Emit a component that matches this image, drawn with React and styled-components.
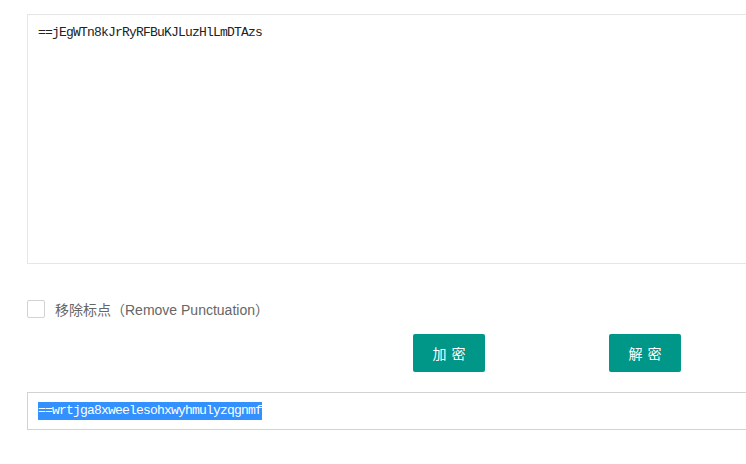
import styled, { createGlobalStyle } from "styled-components";

const GlobalStyle = createGlobalStyle`
  html, body {
    margin: 0;
    padding: 0;
    background: #fff;
    overflow: hidden;
  }
  body {
    font-family: "Liberation Sans", "Noto Sans CJK SC", sans-serif;
  }
`;

export const Page = styled.div`
  width: 960px;
  padding: 14px 0 0 27px;
  display: flex;
  flex-direction: column;
`;

export const InputArea = styled.div`
  height: 250px;
  border: 1px solid #e6e6e6;
  box-sizing: border-box;
  padding: 7px 10px;
`;

export const CodeText = styled.span`
  font-family: "Liberation Mono", "Noto Sans CJK SC", monospace;
  font-size: 13px;
  letter-spacing: -0.8px;
  line-height: 18px;
  background: ${(p) => (p.selected ? "#3390ff" : "transparent")};
  color: ${(p) => (p.selected ? "#fff" : "#222")};
`;

export const OptionRow = styled.label`
  display: flex;
  align-items: center;
  gap: 10px;
  margin-top: 36px;
  height: 18px;
`;

export const CheckBox = styled.span`
  width: 16px;
  height: 16px;
  border: 1px solid #d2d2d2;
  border-radius: 2px;
  background: #fff;
`;

export const OptionText = styled.span`
  font-size: 14px;
  color: #666;
  font-family: "Liberation Sans", "Noto Sans CJK SC", sans-serif;
`;

export const ButtonRow = styled.div`
  display: flex;
  gap: 124px;
  margin-top: 16px;
  padding-left: 386px;
`;

export const ActionButton = styled.button`
  width: 72px;
  height: 38px;
  border: none;
  border-radius: 2px;
  background: #009688;
  color: #fff;
  font-size: 14px;
  letter-spacing: 5px;
  padding: 0 0 0 5px;
  font-family: "Noto Sans CJK SC", sans-serif;
  cursor: pointer;
`;

export const OutputBox = styled.div`
  margin-top: 20px;
  height: 38px;
  border: 1px solid #d2d2d2;
  box-sizing: border-box;
  padding: 0 10px;
  display: flex;
  align-items: center;
`;

const App = () => {
  return (
    <>
      <GlobalStyle />
      <Page>
        <InputArea>
          <CodeText>==jEgWTn8kJrRyRFBuKJLuzHlLmDTAzs</CodeText>
        </InputArea>
        <OptionRow>
          <CheckBox />
          <OptionText>移除标点（Remove Punctuation）</OptionText>
        </OptionRow>
        <ButtonRow>
          <ActionButton>加密</ActionButton>
          <ActionButton>解密</ActionButton>
        </ButtonRow>
        <OutputBox>
          <CodeText selected>==wrtjga8xweelesohxwyhmulyzqgnmf</CodeText>
        </OutputBox>
      </Page>
    </>
  );
};

export default App;
